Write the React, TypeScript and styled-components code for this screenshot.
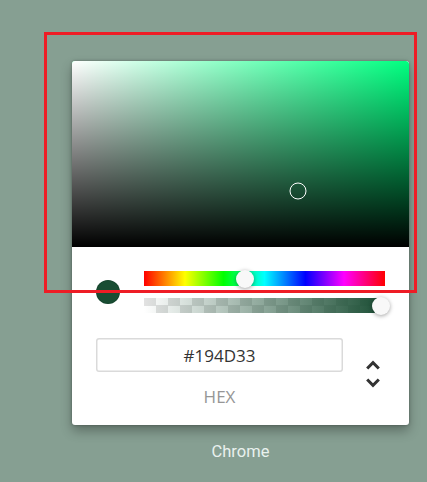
import React from 'react';
import styled, { createGlobalStyle } from 'styled-components';

const GlobalStyle = createGlobalStyle`
  html, body {
    margin: 0;
    padding: 0;
    background: #869f92;
  }
  body {
    font-family: 'Open Sans', 'Noto Sans', sans-serif;
  }
`;

const COLOR = { r: 25, g: 77, b: 51, a: 1 };
const HUE = 150;
const SAT = 0.67;
const VAL = 0.302;

const Page = styled.div`
  position: relative;
  width: 427px;
  height: 482px;
  padding: 61px 0 0 72px;
  box-sizing: border-box;
  overflow: hidden;
`;

const Highlight = styled.div`
  position: absolute;
  left: 44px;
  top: 32px;
  width: 373px;
  height: 261px;
  box-sizing: border-box;
  border: 3px solid #ee1c25;
  pointer-events: none;
  z-index: 2;
`;

const Column = styled.div`
  display: flex;
  flex-direction: column;
  align-items: center;
  width: 337px;
`;

const Card = styled.div`
  width: 337px;
  background: #fff;
  border-radius: 3px;
  box-shadow: 0 0 3px rgba(0, 0, 0, 0.3), 0 6px 12px rgba(0, 0, 0, 0.3);
  overflow: hidden;
`;

const Saturation = styled.div<{ $hue: number }>`
  position: relative;
  height: 186px;
  background: hsl(${(p) => p.$hue}, 100%, 50%);
  border-radius: 3px 3px 0 0;

  &::before,
  &::after {
    content: '';
    position: absolute;
    inset: 0;
  }
  &::before {
    background: linear-gradient(to right, #fff, rgba(255, 255, 255, 0));
  }
  &::after {
    background: linear-gradient(to top, #000, rgba(0, 0, 0, 0));
  }
`;

const SatPointer = styled.div`
  position: absolute;
  width: 17px;
  height: 17px;
  border-radius: 50%;
  box-sizing: border-box;
  border: 1.5px solid #fff;
  transform: translate(-8.5px, -8.5px);
  z-index: 1;
`;

const Body = styled.div`
  padding: 24px 24px 18px;
`;

const Controls = styled.div`
  display: flex;
  align-items: center;
`;

const SwatchCol = styled.div`
  width: 48px;
  flex-shrink: 0;
`;

const Swatch = styled.div<{ $color: string }>`
  width: 24px;
  height: 24px;
  border-radius: 50%;
  background: ${(p) => p.$color};
  box-shadow: inset 0 0 0 1px rgba(0, 0, 0, 0.1);
`;

const Sliders = styled.div`
  flex: 1;
  display: flex;
  flex-direction: column;
  gap: 12px;
`;

const Track = styled.div`
  position: relative;
  height: 15px;
`;

const HueTrack = styled(Track)`
  background: linear-gradient(
    to right,
    #f00 0%,
    #ff0 17%,
    #0f0 33%,
    #0ff 50%,
    #00f 67%,
    #f0f 83%,
    #f00 100%
  );
`;

const AlphaTrack = styled(Track)<{ $rgb: string }>`
  background:
    linear-gradient(to right, rgba(${(p) => p.$rgb}, 0), rgb(${(p) => p.$rgb})),
    repeating-conic-gradient(#ffffff 0% 25%, #e2e2e2 0% 50%) 0 0 / 24px 15px;
`;

const Knob = styled.div`
  position: absolute;
  top: 50%;
  width: 18px;
  height: 18px;
  border-radius: 50%;
  background: #f8f8f8;
  box-shadow: 0 1px 4px rgba(0, 0, 0, 0.37);
  transform: translate(-9px, -50%);
`;

const Fields = styled.div`
  display: flex;
  padding-top: 24px;
`;

const Field = styled.div`
  width: 247px;
  display: flex;
  flex-direction: column;
  align-items: center;
`;

const Input = styled.div`
  width: 100%;
  height: 34px;
  box-sizing: border-box;
  border-radius: 3px;
  box-shadow: inset 0 0 0 1.5px #dadada;
  display: flex;
  align-items: center;
  justify-content: center;
  font-size: 17px;
  color: #333;
  margin-top: 1px;
`;

const Label = styled.div`
  margin-top: 15px;
  font-size: 17px;
  line-height: 20px;
  color: #969696;
  text-transform: uppercase;
`;

const Toggle = styled.div`
  flex: 1;
  display: flex;
  justify-content: flex-end;
  margin-right: -6px;
  padding-top: 19px;
`;

const Caption = styled.div`
  margin-top: 17px;
  font-family: Roboto, 'Noto Sans', sans-serif;
  font-size: 16.5px;
  color: #e9f1ee;
`;

const UnfoldIcon = () => (
  <svg width="36" height="36" viewBox="0 0 24 24">
    <path
      fill="#333"
      d="M12,18.17L8.83,15L7.42,16.41L12,21L16.59,16.41L15.17,15M12,5.83L15.17,9L16.58,7.59L12,3L7.41,7.59L8.83,9L12,5.83Z"
    />
  </svg>
);

const toHex = (n: number) => n.toString(16).padStart(2, '0').toUpperCase();

export default function App() {
  const rgb = `${COLOR.r}, ${COLOR.g}, ${COLOR.b}`;
  const hex = `#${toHex(COLOR.r)}${toHex(COLOR.g)}${toHex(COLOR.b)}`;

  return (
    <>
      <GlobalStyle />
      <Page>
        <Highlight />
        <Column>
          <Card>
            <Saturation $hue={HUE}>
              <SatPointer style={{ left: `${SAT * 100}%`, top: `${(1 - VAL) * 100}%` }} />
            </Saturation>
            <Body>
              <Controls>
                <SwatchCol>
                  <Swatch $color={`rgb(${rgb})`} />
                </SwatchCol>
                <Sliders>
                  <HueTrack>
                    <Knob style={{ left: `calc(${(HUE / 360) * 100}% + 1px)` }} />
                  </HueTrack>
                  <AlphaTrack $rgb={rgb}>
                    <Knob style={{ left: `calc(${COLOR.a * 100}% - 4px)` }} />
                  </AlphaTrack>
                </Sliders>
              </Controls>
              <Fields>
                <Field>
                  <Input>{hex}</Input>
                  <Label>hex</Label>
                </Field>
                <Toggle>
                  <UnfoldIcon />
                </Toggle>
              </Fields>
            </Body>
          </Card>
          <Caption>Chrome</Caption>
        </Column>
      </Page>
    </>
  );
}
